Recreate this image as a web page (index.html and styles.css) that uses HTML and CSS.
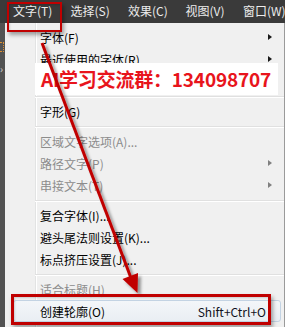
FILE: index.html
```html
<!DOCTYPE html>
<html lang="zh-CN">
<head>
<meta charset="utf-8">
<title>文字菜单</title>
<link rel="stylesheet" href="styles.css">
</head>
<body>
<div class="screen">
  <div class="menubar">
    <span class="menubar-item">文字(T)</span>
    <span class="menubar-item">选择(S)</span>
    <span class="menubar-item">效果(C)</span>
    <span class="menubar-item">视图(V)</span>
    <span class="menubar-item">窗口(W)</span>
  </div>
  <div class="main">
    <div class="side-left">
      <span class="side-marker"></span>
      <span class="side-chevron">›</span>
    </div>
    <div class="menu">
      <div class="row"><span class="label">字体(F)</span><span class="sub"></span></div>
      <div class="row"><span class="label">最近使用的字体(R)</span><span class="sub"></span></div>
      <div class="row"></div>
      <div class="sep"></div>
      <div class="row"><span class="label">字形(G)</span></div>
      <div class="sep"></div>
      <div class="row disabled"><span class="label">区域文字选项(A)...</span></div>
      <div class="row disabled"><span class="label">路径文字(P)</span><span class="sub"></span></div>
      <div class="row disabled"><span class="label">串接文本(T)</span><span class="sub"></span></div>
      <div class="sep"></div>
      <div class="row"><span class="label">复合字体(I)...</span></div>
      <div class="row"><span class="label">避头尾法则设置(K)...</span></div>
      <div class="row"><span class="label">标点挤压设置(J)...</span></div>
      <div class="sep"></div>
      <div class="row disabled"><span class="label">适合标题(H)</span></div>
      <div class="row hover"><span class="label">创建轮廓(O)</span><span class="shortcut">Shift+Ctrl+O</span></div>
    </div>
    <div class="side-right"></div>
  </div>

  <div class="banner">AI学习交流群：134098707</div>

  <svg class="arrow" width="285" height="327" viewBox="0 0 285 327">
    <defs>
      <filter id="sh" x="-20%" y="-20%" width="140%" height="140%">
        <feDropShadow dx="3" dy="3" stdDeviation="1.6" flood-color="#000" flood-opacity="0.4"/>
      </filter>
    </defs>
    <g filter="url(#sh)">
      <line x1="42" y1="43" x2="131" y2="278" stroke="#c00000" stroke-width="3"/>
      <polygon points="137.5,293 122.5,279 138,273" fill="#c00000"/>
    </g>
  </svg>

  <div class="callout callout-menu"></div>
  <div class="callout callout-item"></div>
</div>
</body>
</html>
```

FILE: styles.css
```css
html, body {
  margin: 0;
  padding: 0;
}

body {
  width: 285px;
  height: 327px;
  overflow: hidden;
  font-family: "Noto Sans CJK SC", "Noto Sans", sans-serif;
  font-size: 12px;
}

.screen {
  position: relative;
  width: 285px;
  height: 327px;
  background: #4e4e4e;
  overflow: hidden;
}

.menubar {
  height: 23px;
  background: #3a3a3a;
  display: flex;
  align-items: center;
  padding-left: 13px;
  color: #ececec;
  line-height: 1;
}

.menubar-item {
  flex: 0 0 57.5px;
  white-space: nowrap;
  padding-bottom: 1px;
}

.main {
  display: flex;
  height: 304px;
}

.side-left {
  width: 5px;
  background: #525252;
  display: flex;
  flex-direction: column;
  align-items: flex-start;
}

.side-marker {
  display: block;
  width: 4px;
  height: 10px;
  margin-top: 19px;
  border-top: 1px dotted #e09030;
  border-bottom: 1px dotted #e09030;
  border-right: 1px dotted #e09030;
  box-sizing: border-box;
}

.side-chevron {
  display: block;
  margin-top: 12px;
  font-size: 10px;
  line-height: 1;
  color: #d8d8d8;
}

.menu {
  flex: 1;
  padding-top: 3px;
  background:
    linear-gradient(to right,
      #f0f0f0 0 30px,
      #e2e3e3 30px 31px,
      #ffffff 31px 32px,
      #f0f0f0 32px);
  border-right: 1px solid #9a9a9a;
  color: #000;
}

.row {
  height: 22px;
  display: flex;
  align-items: center;
  padding-left: 35px;
  padding-right: 12px;
  box-sizing: border-box;
  white-space: nowrap;
}

.label {
  flex: 1;
}

.row.disabled {
  color: #8c8c8c;
}

.sub {
  width: 0;
  height: 0;
  border-top: 3.5px solid transparent;
  border-bottom: 3.5px solid transparent;
  border-left: 4px solid #1a1a1a;
}

.row.disabled .sub {
  border-left-color: #808080;
}

.sep {
  height: 8px;
  margin-left: 30px;
  box-sizing: border-box;
  padding-top: 4px;
}

.sep::before {
  content: "";
  display: block;
  height: 1px;
  background: #e0e0e0;
  border-bottom: 1px solid #ffffff;
}

.row.hover {
  margin-left: 8px;
  margin-right: 3px;
  padding-left: 26px;
  padding-right: 14px;
  border: 1px solid #c3d3e3;
  border-radius: 3px;
  background: linear-gradient(#f3f6f9, #e9eef3);
}

.shortcut {
  color: #101020;
}

.banner {
  position: absolute;
  left: 35px;
  top: 63px;
  width: 243px;
  height: 32px;
  background: #ffffff;
  color: #e8141c;
  font-weight: 700;
  font-size: 19px;
  line-height: 32px;
  padding-left: 6px;
  box-sizing: border-box;
  white-space: nowrap;
  letter-spacing: -0.2px;
}

.arrow {
  position: absolute;
  left: 0;
  top: 0;
  pointer-events: none;
}

.callout {
  position: absolute;
  box-sizing: border-box;
  border: 2px solid #c00000;
  box-shadow: 2px 3px 4px rgba(0, 0, 0, 0.35), inset 1px 1px 2px rgba(0, 0, 0, 0.15);
}

.callout-menu {
  left: 7px;
  top: 2px;
  width: 55px;
  height: 30px;
}

.callout-item {
  left: 11px;
  top: 294px;
  width: 260px;
  height: 31px;
  border-width: 3px;
}
```
